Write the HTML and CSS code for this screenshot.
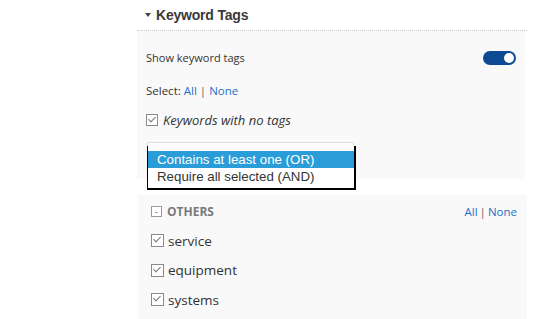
FILE: index.html
```html
<html>

<head>
    <link rel="stylesheet" href="styles.css">
</head>

<body>

    <div class="sidebar">
        <div class="section-head">
            <span class="caret"></span>
            <span class="section-title">Keyword Tags</span>
        </div>

        <div class="panel">
            <div class="toggle-row">
                <span class="label">Show keyword tags</span>
                <span class="toggle"><span class="knob"></span></span>
            </div>

            <div class="select-row">Select: <a href="#">All</a> <span class="bar">|</span> <a href="#">None</a></div>

            <div class="check-row">
                <span class="box checked"></span>
                <em>Keywords with no tags</em>
            </div>

            <div class="dropdown">
                <div class="dropdown-closed"></div>
                <ul class="dropdown-list">
                    <li class="active">Contains at least one (OR)</li>
                    <li>Require all selected (AND)</li>
                </ul>
            </div>
        </div>

        <div class="panel group">
            <div class="group-head">
                <span class="minus">-</span>
                <span class="group-title">OTHERS</span>
                <span class="group-links"><a href="#">All</a> <span class="bar">|</span> <a href="#">None</a></span>
            </div>
            <div class="item"><span class="box checked"></span>service</div>
            <div class="item"><span class="box checked"></span>equipment</div>
            <div class="item"><span class="box checked"></span>systems</div>
        </div>
    </div>

</body>

</html>
```

FILE: styles.css
```css
body,
html {
    background: #ffffff;
    margin: 0;
    height: 100%;
    width: 100%;
    overflow: hidden;
}

.sidebar {
    margin-left: 137px;
    width: 390px;
    font-family: "Open Sans", sans-serif;
    color: #333;
}

.section-head {
    display: flex;
    align-items: center;
    height: 30px;
    border-bottom: 1px dotted #c8c8c8;
}

.caret {
    width: 0;
    height: 0;
    margin-left: 8px;
    margin-right: 5px;
    border-left: 3px solid transparent;
    border-right: 3px solid transparent;
    border-top: 4px solid #444;
}

.section-title {
    font-family: "Liberation Sans", Arial, sans-serif;
    font-weight: bold;
    font-size: 14px;
    letter-spacing: -0.2px;
    color: #3a3a3a;
}

.panel {
    background: #f9f9f9;
    margin-right: 2px;
    padding: 0 9px;
    height: 148px;
}

.toggle-row {
    display: flex;
    align-items: center;
    height: 53px;
    justify-content: space-between;
    font-size: 11px;
}

.toggle {
    display: flex;
    align-items: center;
    justify-content: flex-end;
    width: 33px;
    height: 14px;
    border-radius: 7px;
    background: #0c4a93;
    padding: 0 2px;
    box-sizing: border-box;
}

.knob {
    width: 10px;
    height: 10px;
    border-radius: 50%;
    background: #fff;
}

.select-row {
    height: 14px;
    line-height: 14px;
    font-size: 11.5px;
}

a {
    color: #1f6fc7;
    text-decoration: none;
}

.bar {
    color: #666;
}

.check-row {
    display: flex;
    align-items: center;
    margin-top: 14px;
    font-size: 13px;
    height: 16px;
}

.box {
    display: inline-block;
    width: 10px;
    height: 10px;
    border: 1px solid #8a8a8a;
    background: #fff;
    margin-right: 5px;
    position: relative;
}

.box.checked::after {
    content: "";
    position: absolute;
    left: 3px;
    top: 0px;
    width: 3px;
    height: 6px;
    border-right: 1px solid #777;
    border-bottom: 1px solid #777;
    transform: rotate(45deg);
}

.dropdown {
    position: relative;
    margin-top: 14px;
    margin-left: 1px;
    width: 207px;
}

.dropdown-closed {
    height: 36px;
    border: 1px solid #dcdcdc;
    border-radius: 2px;
    background: #fff;
}

.dropdown-list {
    position: absolute;
    top: 4px;
    left: 0;
    width: 206px;
    margin: 0;
    padding: 5px 0 3px;
    list-style: none;
    background: #fff;
    border: 1px solid #000;
    border-top: none;
    border-bottom-width: 2px;
    border-right-width: 2px;
    font-family: "Liberation Sans", Arial, sans-serif;
    font-size: 13.3px;
    color: #333;
}

.dropdown-list li {
    height: 17px;
    line-height: 17px;
    padding-left: 9px;
}

.dropdown-list li.active {
    background: #2a9dd9;
    color: #fff;
}

.group {
    margin-top: 16px;
    margin-left: 1px;
    margin-right: 0;
    height: 130px;
    padding: 2px 10px 0 13px;
}

.group-head {
    display: flex;
    align-items: center;
    height: 29px;
}

.minus {
    display: inline-flex;
    align-items: center;
    justify-content: center;
    width: 9px;
    height: 9px;
    border: 1px solid #999;
    font-size: 9px;
    line-height: 9px;
    color: #555;
    margin-right: 5px;
    background: #fff;
}

.group-title {
    font-weight: bold;
    font-size: 12px;
    color: #7a7a7a;
}

.group-links {
    margin-left: auto;
    font-size: 11.5px;
    word-spacing: -1px;
}

.item {
    display: flex;
    align-items: center;
    height: 29.5px;
    font-size: 13.5px;
}

.item .box {
    width: 11px;
    height: 11px;
    margin-right: 4px;
}
```
